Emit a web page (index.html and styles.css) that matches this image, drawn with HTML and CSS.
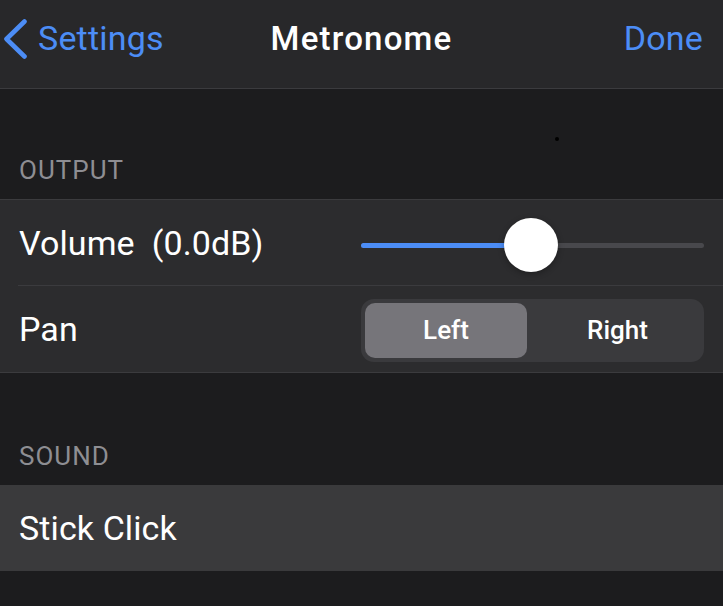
FILE: index.html
```html
<!DOCTYPE html>
<html>
<head>
<meta charset="utf-8">
<link rel="stylesheet" href="styles.css">
</head>
<body>
<div class="screen">
  <header class="nav">
    <div class="nav-left">
      <svg class="chev" width="30" height="40" viewBox="0 0 30 40"><path d="M24.5 2.5 L6.5 20 L24.5 37.5" fill="none" stroke="#4c8df6" stroke-width="4.6" stroke-linecap="round" stroke-linejoin="round"/></svg>
      <span class="nav-link">Settings</span>
    </div>
    <div class="nav-title">Metronome</div>
    <div class="nav-right"><span class="nav-link">Done</span></div>
  </header>

  <section class="group">
    <div class="group-head">
      <span class="dot"></span>
      <span class="head-text">OUTPUT</span>
    </div>
    <div class="list">
      <div class="row first">
        <span class="label">Volume&nbsp; (0.0dB)</span>
        <div class="slider">
          <div class="track"><div class="fill" style="width:49.6%"></div></div>
          <div class="thumb" style="left:49.6%"></div>
        </div>
      </div>
      <div class="row sep">
        <span class="label">Pan</span>
        <div class="segmented">
          <div class="seg selected">Left</div>
          <div class="seg">Right</div>
        </div>
      </div>
    </div>
  </section>

  <section class="group">
    <div class="group-head second">
      <span class="head-text">SOUND</span>
    </div>
    <div class="list plain">
      <div class="row highlighted">
        <span class="label">Stick Click</span>
      </div>
    </div>
  </section>
</div>
</body>
</html>
```

FILE: styles.css
```css
* { box-sizing: border-box; }
html, body { margin: 0; padding: 0; }
body {
  background: #1c1c1e;
  font-family: Roboto, "Liberation Sans", sans-serif;
  color: #ffffff;
  width: 723px;
  height: 606px;
  overflow: hidden;
}
.screen { width: 723px; }

.nav {
  height: 89px;
  background: #28282a;
  border-bottom: 1px solid #3b3b3e;
  display: grid;
  grid-template-columns: 1fr auto 1fr;
  align-items: center;
  padding: 0 20px 12px 20px;
}
.nav-left { display: flex; align-items: center; gap: 8px; margin-left: -20px; }
.chev { display: block; margin-top: 1px; }
.nav-link { font-size: 34px; color: #4c8df6; letter-spacing: 0.2px; }
.nav-title { font-size: 33px; font-weight: 500; letter-spacing: 1.2px; color: #fff; }
.nav-right { display: flex; justify-content: flex-end; }

.group-head {
  position: relative;
  height: 110px;
  display: flex;
  align-items: flex-end;
  padding: 0 19px 14px;
}
.group-head.second { height: 112px; }
.head-text { font-size: 26px; color: #8e8e93; line-height: 30px; letter-spacing: 1px; }
.dot {
  position: absolute;
  left: 555px; top: 48px;
  width: 4px; height: 4px;
  border-radius: 50%;
  background: #000;
}

.list {
  background: #2c2c2e;
  border-top: 1px solid #3b3b3e;
  border-bottom: 1px solid #3b3b3e;
}
.list.plain { border: none; }
.row {
  height: 86px;
  display: flex;
  align-items: center;
  justify-content: space-between;
  padding: 0 19px;
  position: relative;
}
.row.first { height: 85px; }
.row.sep { height: 87px; padding-top: 1px; }
.row.sep::before {
  content: "";
  position: absolute;
  left: 18px; right: 0; top: 0;
  height: 1px;
  background: #3b3b3e;
}
.row.highlighted { background: #3a3a3c; }
.label { font-size: 34px; color: #fff; letter-spacing: 0.1px; }

.slider {
  position: relative;
  width: 343px;
  height: 54px;
  margin-top: 4px;
}
.track {
  position: absolute;
  left: 0; right: 0; top: 25px;
  height: 5px;
  border-radius: 3px;
  background: #48484c;
  overflow: hidden;
}
.fill { height: 100%; background: #4c8df6; }
.thumb {
  position: absolute;
  top: 0;
  width: 54px; height: 54px;
  margin-left: -27px;
  border-radius: 50%;
  background: #fff;
  box-shadow: 0 2px 6px rgba(0,0,0,0.3);
}

.segmented {
  width: 343px;
  height: 63px;
  margin-top: 2px;
  background: #3a3a3d;
  border-radius: 13px;
  padding: 4px;
  display: grid;
  grid-template-columns: 162px 1fr;
}
.seg {
  display: flex;
  align-items: center;
  justify-content: center;
  font-size: 26px;
  font-weight: 500;
  color: #fff;
  border-radius: 10px;
}
.seg.selected { background: #76757a; }
.seg:last-child { padding-left: 8px; }
```
